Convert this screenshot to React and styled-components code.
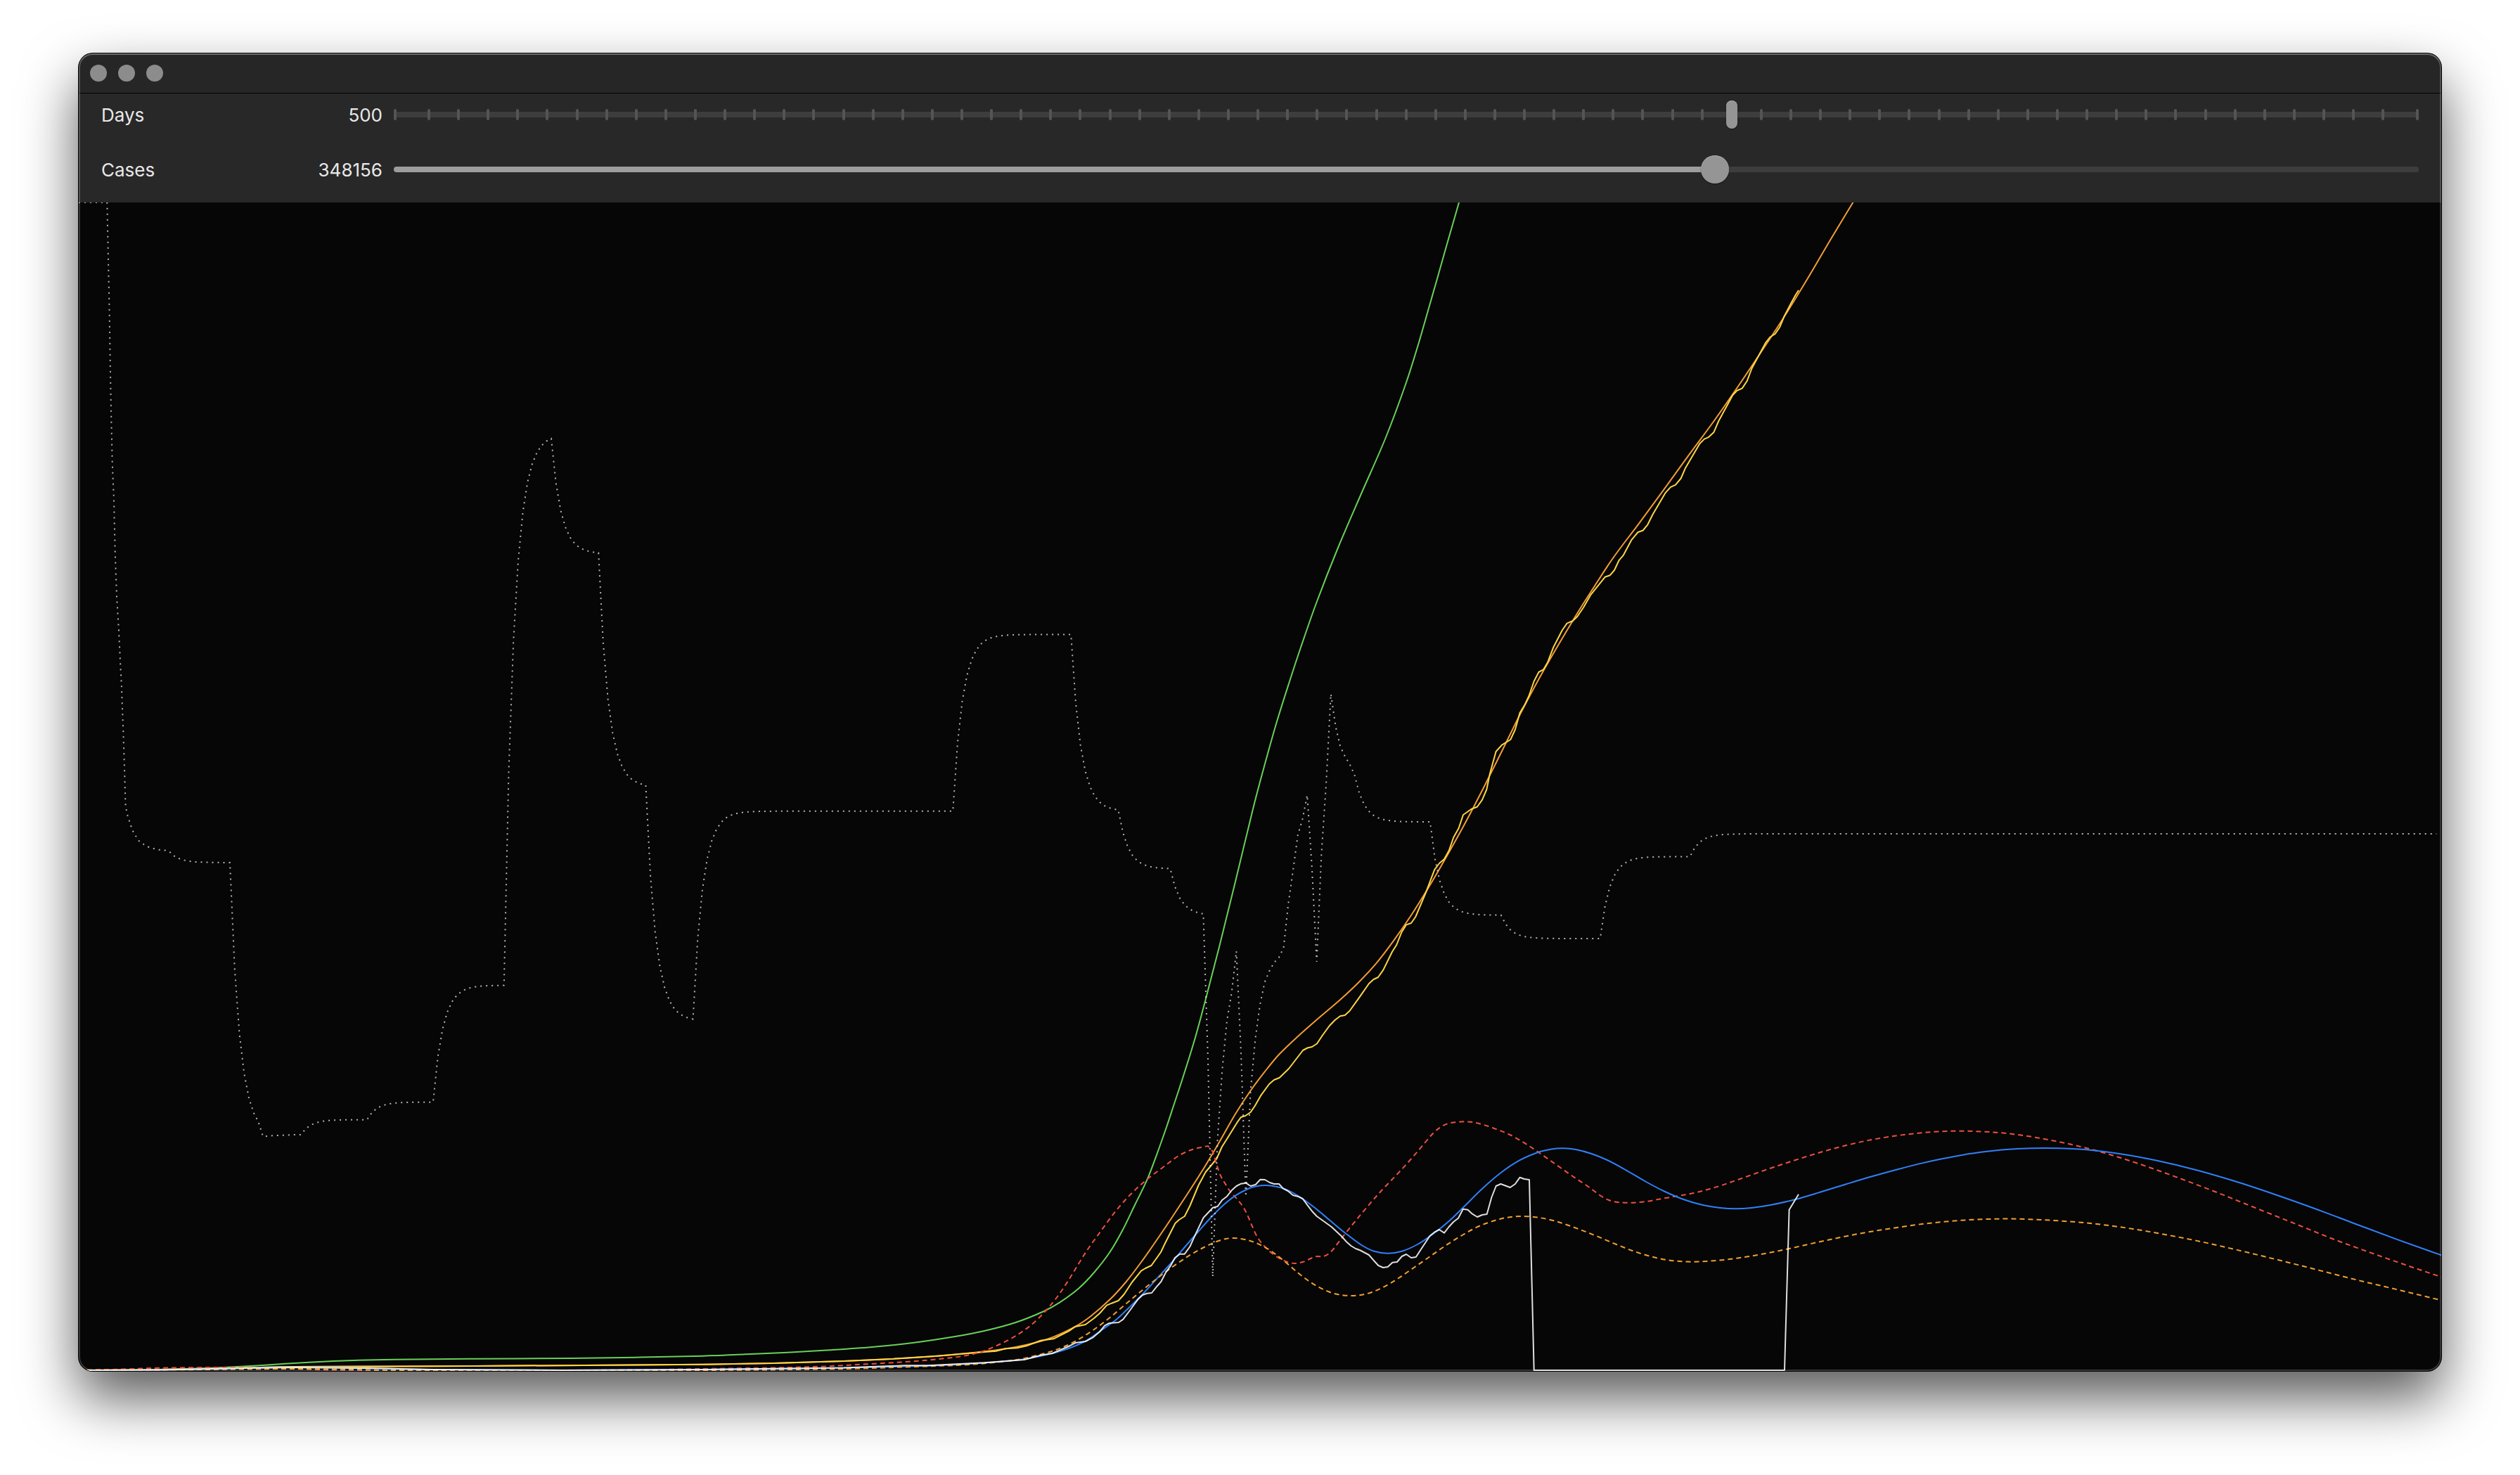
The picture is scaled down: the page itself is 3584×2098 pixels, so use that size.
import React, { useState } from "react";
import styled, { createGlobalStyle } from "styled-components";

const GlobalStyle = createGlobalStyle`
  *, *::before, *::after { box-sizing: border-box; }
  body { margin: 0; background: #ffffff; }
`;

const Desktop = styled.main`
  display: flex;
  min-height: 100vh;
  padding: 76px 112px 148px;
  font-family: Inter, "Liberation Sans", sans-serif;
`;

const Window = styled.section`
  position: relative;
  display: flex;
  flex: 1;
  flex-direction: column;
  min-width: 0;
  overflow: hidden;
  border-radius: 20px;
  background: #060606;
  box-shadow: 0 0 0 1px #000000, 0 38px 80px rgba(0, 0, 0, 0.66);

  /* light rim that lies over the content */
  &::after {
    content: "";
    position: absolute;
    inset: 0;
    border-radius: inherit;
    box-shadow: inset 0 0 0 2px rgba(255, 255, 255, 0.2), inset 0 2px 0 rgba(255, 255, 255, 0.16);
    pointer-events: none;
  }
`;

const TitleBar = styled.header`
  display: flex;
  align-items: center;
  gap: 16px;
  height: 57px;
  padding: 0 16px;
  border-bottom: 1px solid #000000;
  background: #262626;
`;

const WindowButton = styled.button`
  width: 24px;
  height: 24px;
  padding: 0;
  border: 0;
  border-radius: 50%;
  background: #8c8c8c;
`;

const Controls = styled.form`
  display: flex;
  flex-direction: column;
  gap: 38px;
  padding: 10px 32px 27px;
  background: #282828;
`;

const ControlRow = styled.div`
  display: grid;
  grid-template-columns: 192px 192px 1fr;
  align-items: start;
  column-gap: 16px;
  height: 40px;
  color: #e8e8e8;
  font-size: 26px;
  line-height: 42px;
`;

const Value = styled.output`
  text-align: right;
`;

const SliderStack = styled.div`
  display: grid;
  align-items: center;
  height: 40px;

  > * {
    grid-area: 1 / 1;
  }
`;

const TickTrack = styled.div`
  display: flex;
  justify-content: space-between;
  background: linear-gradient(#3d3d3d, #3d3d3d) center / 100% 8px no-repeat;
`;

const InnerTicks = styled.div`
  display: flex;
  flex: 1;
  justify-content: space-between;
  margin: 0 44px;
`;

const Tick = styled.span`
  width: 4px;
  height: 16px;
  border-radius: 2px;
  background: #545454;
`;

const Slider = styled.input.attrs({ type: "range" })`
  width: 100%;
  height: 40px;
  margin: 0;
  appearance: none;
  background: transparent;

  &::-webkit-slider-runnable-track {
    height: 8px;
    border-radius: 4px;
    background: ${(p) =>
      p.$filled
        ? "linear-gradient(to right, #9d9d9d var(--fill), #3d3d3d var(--fill))"
        : "transparent"};
  }

  &::-webkit-slider-thumb {
    appearance: none;
    width: ${(p) => (p.$filled ? 40 : 16)}px;
    height: 40px;
    margin-top: -16px;
    border-radius: 20px;
    background: #959595;
    box-shadow: inset 0 1px 0 #a8a8a8, 0 1px 2px rgba(0, 0, 0, 0.4);
  }
`;

const Plot = styled.svg`
  display: block;
  flex: 1;
  width: 100%;
  min-height: 0;
  background: #060606;
`;

const Curve = styled.path`
  fill: none;
  stroke: ${(p) => p.$color};
  stroke-width: 2px;
  stroke-dasharray: ${(p) => p.$dash || "none"};
  stroke-linejoin: ${(p) => (p.$dash ? "miter" : "round")};
  vector-effect: non-scaling-stroke;
`;

/* ---- curve geometry: x0 is day zero, y1 is the baseline ---- */
const X0 = 112;
const BASE = 1950;
const DAY = 3360 / 500;
const RANGE = 1662;
const DEFAULT_DAYS = 500;
const DEFAULT_CASES = 348156;

const pairs = (text) =>
  text
    .trim()
    .split(/\s+/)
    .map((p) => p.split(",").map(Number));

const line = (pts) => "M" + pts.map((p) => p.join(",")).join("L");

const smooth = (pts) => {
  let d = `M${pts[0]}`;
  for (let i = 0; i < pts.length - 1; i++) {
    const a = pts[i - 1] || pts[i];
    const b = pts[i];
    const c = pts[i + 1];
    const e = pts[i + 2] || c;
    const h = c[0] - b[0];
    const sb = (c[1] - a[1]) / (c[0] - a[0]);
    const sc = (e[1] - b[1]) / (e[0] - b[0]);
    d += `C${b[0] + h / 3},${b[1] + (sb * h) / 3} ${c[0] - h / 3},${c[1] - (sc * h) / 3} ${c}`;
  }
  return d;
};

/* Appends one point per day while the level relaxes towards its target. */
const relax = (pts, segments) => {
  const out = pts.slice();
  let level = out[out.length - 1][1];
  segments.forEach(([from, to, target]) => {
    for (let day = from + 1; day <= to; day++) {
      level = target + (level - target) * 0.612;
      out.push([X0 + day * DAY, level]);
    }
  });
  return out;
};

const onDays = (first, levels) => levels.map((y, i) => [X0 + (first + i) * DAY, y]);

let rate = pairs(`112,288 152.3,288 154,369 155.7,449 156.8,520 158,584 159.7,657 162,712 163.7,785
  166,848 168.9,896 171.2,944 172.9,976 174,1008 175.2,1037 176.9,1089 178.6,1147 181.5,1160 185,1171
  188.4,1181 193,1189 197.6,1196 204.5,1201 210.8,1204.5 218.8,1207 226,1208.7 235,1209.5 241,1211.5
  247.5,1217.5 254,1221 262,1223.5 269,1225 278,1226 294,1226.6 327,1227`);
rate = relax(rate, [[32, 38, 1616]]);
rate = rate.concat(onDays(39, [1616.5, 1616, 1615.2, 1615, 1614.8, 1614.5, 1614.2, 1614, 1614]));
rate = relax(rate, [
  [47, 61, 1592.6],
  [61, 75, 1567.6],
  [75, 90, 1401.5],
  [90, 100, 618],
  [100, 110, 787.5],
  [110, 120, 1119],
  [120, 130, 1452],
  [130, 185, 1153.8],
  [185, 210, 902.5],
  [210, 220, 1153.8],
  [220, 231, 1235.8],
  [231, 238, 1302],
]);
rate = rate.concat(
  onDays(239, [
    1510, 1816, 1622, 1522, 1452, 1412, 1353, 1500, 1702, 1552, 1478, 1429, 1397, 1381, 1369, 1362,
    1348, 1285, 1238, 1188, 1165, 1131, 1235, 1368, 1215, 1115, 987, 1033, 1062, 1076, 1087, 1102,
  ])
);
rate = relax(rate, [
  [270, 286, 1169],
  [286, 301, 1301.7],
  [301, 322, 1335],
  [322, 341, 1218.5],
  [341, 499, 1186],
]);

const infected = pairs(`112,1949 150,1949 226,1948 295,1946 347,1943.5 387,1941 444,1937.5 502,1935 559,1933.7
  674,1932.7 812,1932 904,1930.7 1000,1928.7 1060,1926.3 1120,1923.7 1180,1920.3 1240,1916 1300,1909.7
  1360,1900.7 1400,1893 1444.6,1881 1484.8,1865 1507,1852.7 1534,1832.7 1556,1810 1578.6,1780.7
  1596.4,1750 1614.3,1713.3 1632,1676.7 1646.9,1637.5 1659,1603.3 1670,1570 1681,1536.7 1698.7,1480
  1714.8,1421 1734,1347 1757.7,1251 1780.7,1156 1791.5,1114 1814.3,1032 1837,960 1849.6,922 1872,858
  1903,779 1937,700 1971,622 2000,544 2018,487 2031.5,440 2045,393 2058,347 2075,288 2080,270`);

const model = pairs(`112,1949 226,1948 347,1945.5 416,1944 674,1943 1000,1940.7 1100,1939 1200,1936 1267,1933
  1333,1928.7 1400,1922.3 1444.6,1916 1489,1905 1529.5,1886.7 1551.8,1871.7 1578.6,1848.3 1600.9,1824
  1623.2,1795 1645.5,1763.3 1667.9,1730 1690.2,1696 1712.5,1661 1734.8,1623.3 1757,1584.5 1779.5,1550
  1801.8,1520.5 1819.4,1499.5 1844.9,1475 1875.5,1448 1906,1422 1931.6,1398 1957,1370.7 1982.7,1337.2
  2008.2,1300 2033.7,1259 2059.2,1215 2084.7,1169 2110.2,1120 2135.7,1069 2165,1010 2196,952.4
  2241,876 2267.9,833.6 2294.6,793 2330.4,745.3 2366,696.8 2401.8,647.3 2437.5,599 2473,548
  2504.5,501 2535.7,453.5 2571.4,395.3 2602.7,342 2635.3,288 2648,267`);

const reported = pairs(`226,1948 295,1947 347,1945.5 416,1944 674,1943 1000,1940.7 1100,1939 1200,1936
  1267,1933 1333,1928.7 1400,1923 1416.7,1921.7 1430,1918.3 1446.7,1917.3 1460,1914.3 1480,1906.7 1498.3,1904.3
  1520,1893.3 1529.5,1887 1543.8,1884 1556,1875 1564,1868 1574,1856.7 1581,1853.7 1590.6,1850 1598.7,1841
  1609.8,1824 1623,1807.7 1629,1804 1637.5,1800 1651,1781 1656.7,1769 1671.4,1740 1676.8,1735 1684.8,1730
  1692.4,1715 1704.5,1686 1714.7,1667 1722.3,1658 1730.4,1648 1738,1631 1745,1620 1759.4,1596.7 1765,1589
  1771.4,1587 1778.6,1582 1784.8,1573 1792.9,1558.7 1805,1542 1812,1536 1819.6,1533 1833,1520 1853,1494
  1859.5,1490.5 1866,1489 1873,1484.5 1880.6,1473 1890.8,1459 1898.5,1451 1906,1445.3 1912.8,1444 1919.4,1438
  1934,1417.6 1947,1399 1953.6,1393 1960,1390 1967.3,1379.6 1980,1353.8 1986.2,1344 1993.4,1326 2000,1315.4
  2007,1313 2013.3,1304 2027.6,1270.3 2040.3,1236.8 2047,1228 2054,1222 2060.7,1210 2067.3,1191 2074.5,1178.3
  2081,1159 2092.3,1151 2101,1147.5 2108,1137.7 2114.3,1123 2118.9,1100.6 2127.6,1069 2136,1059.6 2148.3,1052
  2155,1037.5 2161.5,1014 2168.8,1002 2174.4,990 2181.7,969 2188.4,956 2195,952.4 2201.3,941.7 2209,921.3
  2221.9,896.3 2228.6,886.6 2237,883 2243.3,877 2252.2,863.7 2262.5,845.8 2282.6,820.8 2289.7,818.3 2296,811
  2302.7,796.8 2308.5,790.2 2320.5,767.8 2329.5,757 2336.6,754.5 2343.3,746.3 2350.4,732 2368.3,701.4
  2375.9,692.8 2383,689.7 2390.6,680.5 2397.3,665.2 2417.4,631 2424,624.4 2430,621.8 2437.5,614.7 2444.2,599
  2464.3,562 2470.5,555.5 2477.7,552.4 2484.8,541.7 2491.5,524 2511,487.7 2517.4,479.5 2524.6,475 2531.3,465.2
  2537.5,450 2546.9,432 2553.6,419.8 2558,412.7`);

const daily = pairs(`112,1949 226,1948.5 347,1946 421,1945 520,1946 617,1948 800,1949 1000,1948 1200,1945.7
  1300,1943.3 1360,1941 1433,1936 1466.7,1931.5 1511.6,1920.7 1542.9,1908 1565,1893 1587.5,1877 1605,1860.7
  1623,1843 1645.5,1818.5 1667.9,1794 1685.7,1773 1703.6,1752.5 1721,1733 1739,1715 1757,1700.7 1775,1691
  1788.4,1687 1800.4,1686 1815,1687.7 1828.6,1691.7 1846.4,1701 1868.8,1717 1891,1735.5 1913.4,1754
  1935.7,1770.5 1953.6,1779.5 1973.7,1782.7 1993.8,1779.7 2016,1770 2038.4,1755 2060.7,1737 2083,1715.5
  2107,1691.7 2134,1668.5 2160.7,1650.7 2187.5,1639 2205.4,1634.7 2223.2,1633.3 2241,1635 2263.4,1641
  2285.7,1650 2312.5,1664.3 2339.3,1680 2366,1694 2392.9,1705.5 2419.6,1713.5 2446.4,1718 2468.8,1719.3
  2491,1718 2517.9,1714 2553.6,1706 2589.3,1695.5 2625,1684.5 2660.7,1673.8 2700,1663 2733.8,1654.4
  2762,1648.2 2801.5,1641 2835.3,1636.7 2869,1634 2908.6,1633 2948,1634 2981.9,1636.7 3015.7,1641.3
  3066.4,1650.5 3122.8,1664 3179,1680.3 3235.5,1699 3291.9,1719 3348.3,1740.2 3410.3,1763.4 3474,1786`);

const reproRise = pairs(`112,1949 174.6,1947.5 226,1945.8 330,1945 387,1946 473,1948.5 700,1949.5 900,1948.5
  1000,1947 1100,1945.5 1167,1943.7 1233,1940.3 1293,1936.7 1333,1933.3 1366.7,1929.3 1393,1923.7 1413,1916
  1433,1906.7 1453,1894.7 1470,1881.7 1486.7,1865 1503,1845.5 1519,1822 1534,1797.5 1547,1777 1565,1752
  1587.5,1721.7 1609.8,1697 1632,1677 1654.5,1660 1672.3,1646.5 1685.7,1639 1699,1634 1708,1632 1718,1630`);

const repro = pairs(`1725,1639 1730.4,1656.7 1735.7,1671.7 1743.8,1685.7 1750.4,1695.7 1760.7,1707 1768.3,1717
  1774,1728 1780.4,1743 1788.4,1760 1799.6,1774 1810.7,1784 1824,1792 1833,1795.7 1842,1797 1853,1795 1862,1791
  1871,1787.3 1882,1787 1888.8,1784 1895.5,1777.7 1909,1760 1935.7,1727 1962.5,1696 1993.8,1663 2016,1638
  2038.4,1611.7 2049.6,1602.7 2060.7,1597.7 2072,1596 2083,1595.3 2093.8,1596 2107,1599 2125,1605 2147.3,1614
  2169.6,1626.7 2192,1641.7 2214.3,1657.3 2236.6,1673 2259,1688 2276.8,1701 2288,1707 2299,1709.7 2317,1710.7
  2339,1709.3 2366,1704.5 2392.9,1700 2415,1695.5 2446.4,1686.7 2482,1674.3 2517.9,1661.7 2553.6,1650
  2589,1639 2625,1629.3 2660.7,1621.3 2700,1615 2728,1611.8 2756.4,1609.5 2790.2,1608.7 2824,1609.8
  2857.8,1612.5 2891.7,1617.3 2925.5,1623.5 2959.3,1631 2993,1640 3038,1654 3094.6,1674 3151,1695.3
  3207.3,1717.9 3263.7,1740.4 3320,1763 3376.4,1783.5 3421.5,1799.3 3474,1817`);

const active = pairs(`112,1949 295,1948 410,1947 502,1948 559,1949 1000,1949 1200,1947 1300,1944 1373,1941.3
  1413,1938 1446.7,1934 1473,1928.3 1496.7,1921.7 1516.7,1914 1534,1905 1556,1891 1578.6,1874 1600.9,1855
  1623,1836.5 1645.5,1818.5 1667.9,1801.7 1690,1786.7 1712.5,1774 1730,1766 1743.8,1762 1755.8,1761
  1770.5,1763 1784,1767 1797.3,1773 1810.7,1781.5 1828.6,1795.5 1846.4,1810.7 1864.3,1824 1882,1834
  1900,1840.5 1922.3,1843 1944.6,1840 1967,1831 1989,1818 2011.6,1802.5 2034,1787 2056,1771.7 2078.6,1757.5
  2100,1745.7 2113.8,1740 2134,1733.7 2151.8,1730.7 2167.4,1730 2187.5,1731.7 2209.8,1736.3 2236.6,1745
  2267.9,1757 2303.6,1772 2330.4,1782 2357,1789.5 2379.5,1793.3 2406.3,1794.7 2437.5,1793.3 2473,1789.3
  2509,1783.3 2544.6,1776 2589.3,1766 2638.4,1755.8 2669.6,1750.3 2700,1745.7 2733.8,1741 2773.3,1737
  2812.7,1734.5 2857.8,1733.6 2897.3,1734.7 2942.4,1737.4 2981.9,1741 3027,1747 3072,1754.6 3128.4,1765.7
  3184.8,1778.6 3241,1792.3 3297.5,1806.6 3353.9,1821 3410.3,1834.5 3474,1850`);

const observed = pairs(`112,1949 226,1948.5 347,1946 421,1945 520,1946 617,1948 800,1949 1000,1948 1200,1945.5
  1286.7,1942.3 1320,1942.3 1400,1938.3 1456.7,1934 1480,1927.7 1496.7,1925 1520,1915 1529.5,1910 1543.8,1908
  1554,1902.7 1564.3,1894 1571,1885.7 1577.7,1882 1591,1881 1597.3,1876.7 1607.6,1863 1618.8,1847.7 1625,1842
  1631.3,1839.7 1638,1839 1644.6,1830.7 1651.3,1823 1658,1810 1664.7,1800.7 1671,1789 1678,1783.7 1684.8,1783.7
  1692.4,1773 1698,1760.7 1705,1745.7 1711.6,1732 1725,1717.7 1731.7,1716 1738.4,1706.7 1745,1701.7
  1751.8,1693 1758.5,1687 1765,1683.7 1772,1682.7 1778.6,1687 1785.7,1685 1792.4,1677.7 1799,1678 1805.8,1682
  1812,1684 1819,1684 1825,1690.7 1831.7,1694 1838.8,1700 1845.5,1701.7 1852.7,1705 1859.8,1714.7 1866,1722.7
  1872.8,1730 1893.3,1744.7 1907.6,1758 1914.3,1765.7 1921.4,1772 1928,1776 1934.8,1778.5 1946.9,1785
  1953.6,1792.7 1960.3,1800 1967,1803 1973.7,1802 1980.4,1795.7 1987,1795 1993.8,1787 2000,1784 2007,1789
  2013.8,1788 2020.5,1777.7 2033.5,1758 2040,1752.7 2046.9,1749 2054,1753.7 2060.7,1745 2067.4,1737.7
  2074,1732.7 2080.8,1719.7 2087.5,1720.7 2094,1726.7 2101,1731 2108,1728 2114.7,1727 2121.4,1703 2127.7,1687
  2134.4,1684 2147.8,1689 2155,1684 2161.6,1674.7 2167.9,1677 2175,1678 2181.7,1949 2538,1949 2544.6,1720.7
  2558,1698.7`);

const CURVES = [
  { id: "infected", d: smooth(infected), color: "#68d158" },
  { id: "model", d: smooth(model), color: "#f39d33" },
  { id: "reported", d: line(reported), color: "#fbd645" },
  { id: "repro", d: smooth(reproRise) + smooth([[1718, 1630], ...repro]).replace("M", "L"), color: "#ef4f40", dash: "7 5" },
  { id: "daily", d: smooth(daily), color: "#3080f8" },
  { id: "active", d: smooth(active), color: "#f0a030", dash: "7 5" },
  { id: "observed", d: line(observed), color: "rgba(255, 255, 255, 0.87)" },
  { id: "rate", d: line(rate), color: "rgba(255, 255, 255, 0.7)", dash: "2 6" },
];

const TICKS = Array.from({ length: 67 }, (_, i) => i);
const MAX_CASES = 531868;

export default function App() {
  const [days, setDays] = useState(DEFAULT_DAYS);
  const [cases, setCases] = useState(DEFAULT_CASES);
  const height = (RANGE * Math.max(cases, 1)) / DEFAULT_CASES;
  const fill = `calc(20px + (100% - 40px) * ${cases / MAX_CASES})`;

  return (
    <>
      <GlobalStyle />
      <Desktop>
        <Window>
          <TitleBar>
            <WindowButton type="button" aria-label="Close" />
            <WindowButton type="button" aria-label="Minimize" />
            <WindowButton type="button" aria-label="Zoom" />
          </TitleBar>
          <Controls>
            <ControlRow>
              <label htmlFor="days">Days</label>
              <Value htmlFor="days">{days}</Value>
              <SliderStack>
                <TickTrack>
                  <Tick />
                  <InnerTicks>
                    {TICKS.map((i) => (
                      <Tick key={i} />
                    ))}
                  </InnerTicks>
                  <Tick />
                </TickTrack>
                <Slider
                  id="days"
                  min={50}
                  max={730}
                  step={10}
                  value={days}
                  onChange={(e) => setDays(Number(e.target.value))}
                />
              </SliderStack>
            </ControlRow>
            <ControlRow>
              <label htmlFor="cases">Cases</label>
              <Value htmlFor="cases">{cases}</Value>
              <SliderStack>
                <Slider
                  id="cases"
                  $filled
                  min={0}
                  max={MAX_CASES}
                  value={cases}
                  style={{ "--fill": fill }}
                  onChange={(e) => setCases(Number(e.target.value))}
                />
              </SliderStack>
            </ControlRow>
          </Controls>
          <Plot
            viewBox={`${X0} ${BASE - height} ${days * DAY} ${height}`}
            preserveAspectRatio="none"
            role="img"
            aria-label="Cases per day"
          >
            {CURVES.map((c) => (
              <Curve key={c.id} d={c.d} $color={c.color} $dash={c.dash} />
            ))}
          </Plot>
        </Window>
      </Desktop>
    </>
  );
}
